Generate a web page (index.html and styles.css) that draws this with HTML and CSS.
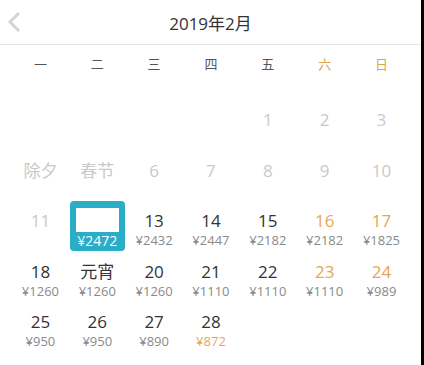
FILE: index.html
```html
<!DOCTYPE html>
<html lang="zh">
<head>
<meta charset="utf-8">
<link rel="stylesheet" href="styles.css">
</head>
<body>
<div class="page">
  <div class="header">
    <svg class="back" width="16" height="22" viewBox="0 0 16 22"><polyline points="13,2 4,11 13,20" fill="none" stroke="#d4d4d4" stroke-width="3"/></svg>
    <div class="title">2019年2月</div>
    <div></div>
  </div>
  <div class="weekdays">
    <div>一</div><div>二</div><div>三</div><div>四</div><div>五</div><div class="we">六</div><div class="we">日</div>
  </div>
  <div class="days">
    <div class="cell"></div><div class="cell"></div><div class="cell"></div><div class="cell"></div>
    <div class="cell past"><div class="num">1</div></div>
    <div class="cell past"><div class="num">2</div></div>
    <div class="cell past"><div class="num">3</div></div>

    <div class="cell past"><div class="num">除夕</div></div>
    <div class="cell past"><div class="num">春节</div></div>
    <div class="cell past"><div class="num">6</div></div>
    <div class="cell past"><div class="num">7</div></div>
    <div class="cell past"><div class="num">8</div></div>
    <div class="cell past"><div class="num">9</div></div>
    <div class="cell past"><div class="num">10</div></div>

    <div class="cell past"><div class="num">11</div></div>
    <div class="cell sel"><div class="mask"></div><div class="price">¥2472</div></div>
    <div class="cell"><div class="num">13</div><div class="price">¥2432</div></div>
    <div class="cell"><div class="num">14</div><div class="price">¥2447</div></div>
    <div class="cell"><div class="num">15</div><div class="price">¥2182</div></div>
    <div class="cell wk"><div class="num">16</div><div class="price">¥2182</div></div>
    <div class="cell wk"><div class="num">17</div><div class="price">¥1825</div></div>

    <div class="cell"><div class="num">18</div><div class="price">¥1260</div></div>
    <div class="cell"><div class="num">元宵</div><div class="price">¥1260</div></div>
    <div class="cell"><div class="num">20</div><div class="price">¥1260</div></div>
    <div class="cell"><div class="num">21</div><div class="price">¥1110</div></div>
    <div class="cell"><div class="num">22</div><div class="price">¥1110</div></div>
    <div class="cell wk"><div class="num">23</div><div class="price">¥1110</div></div>
    <div class="cell wk"><div class="num">24</div><div class="price">¥989</div></div>

    <div class="cell"><div class="num">25</div><div class="price">¥950</div></div>
    <div class="cell"><div class="num">26</div><div class="price">¥950</div></div>
    <div class="cell"><div class="num">27</div><div class="price">¥890</div></div>
    <div class="cell"><div class="num">28</div><div class="price low">¥872</div></div>
  </div>
</div>
</body>
</html>
```
FILE: styles.css
```css
html, body {
  margin: 0;
  padding: 0;
  background: #000;
}
body {
  width: 424px;
  height: 365px;
  overflow: hidden;
  font-family: "Open Sans", "Noto Sans CJK SC", sans-serif;
}
.page {
  width: 421px;
  height: 365px;
  background: #fff;
}
.header {
  height: 44px;
  display: grid;
  grid-template-columns: 44px 1fr 44px;
  align-items: center;
  border-bottom: 1px solid #e4e4e4;
}
.back {
  margin-left: 6px;
  display: block;
}
.title {
  text-align: center;
  font-size: 17px;
  color: #333;
  font-family: "Open Sans", "Noto Sans CJK SC", sans-serif;
}
.weekdays {
  display: grid;
  grid-template-columns: repeat(7, 56.85px);
  padding: 0 11px 0 12px;
  height: 36px;
  align-items: center;
  font-size: 13px;
  color: #555;
  text-align: center;
  font-family: "Noto Sans CJK SC", sans-serif;
}
.weekdays .we {
  color: #d9a54e;
}
.days {
  display: grid;
  grid-template-columns: repeat(7, 56.85px);
  grid-auto-rows: 50.5px;
  padding: 18px 11px 0 12px;
  text-align: center;
}
.cell {
  padding-top: 11px;
  box-sizing: border-box;
}
.num {
  font-size: 17px;
  line-height: 20px;
  color: #333;
}
.price {
  font-size: 13px;
  line-height: 18px;
  color: #8a8a8a;
}
.past .num {
  color: #c9c9c9;
}
.wk .num {
  color: #e8a653;
}
.price.low {
  color: #e6a756;
}
.cell.sel {
  background: #2aadc6;
  border-radius: 4px;
  margin: 1px 1px 0 1px;
  padding-top: 7px;
  height: 50px;
}
.mask {
  height: 24px;
  margin: 0 6px;
  background: #fff;
}
.sel .price {
  color: #fff;
  font-size: 14px;
}
```
